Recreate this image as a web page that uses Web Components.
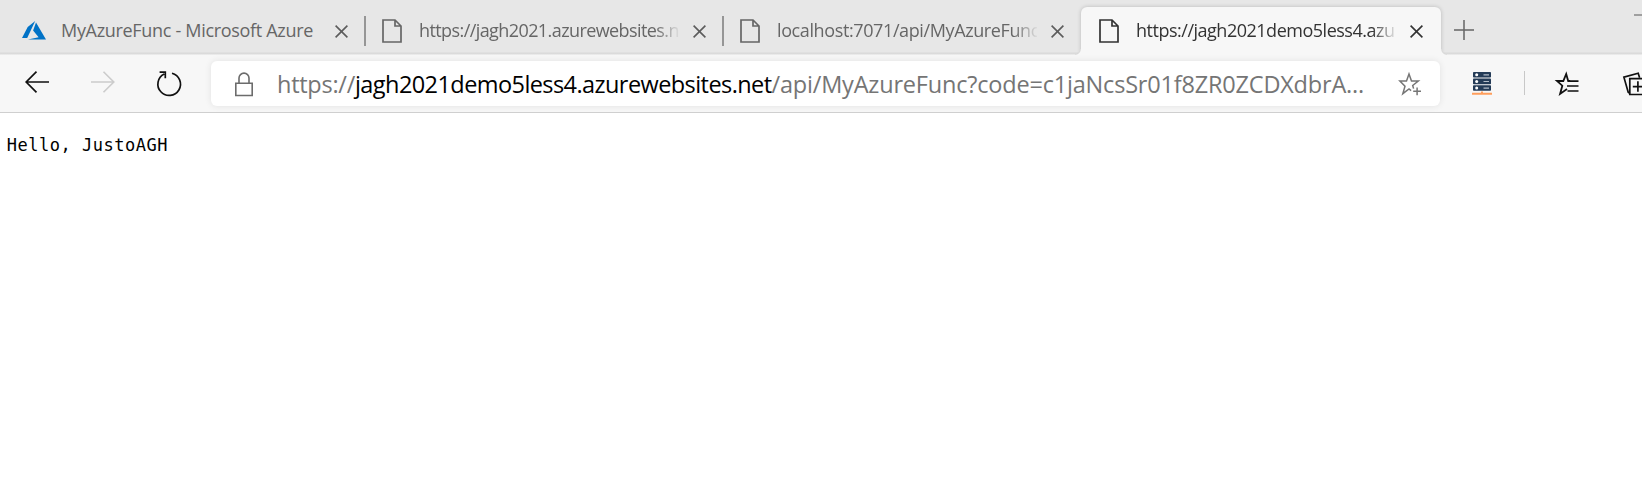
<!DOCTYPE html>
<html lang="en">
<head>
<meta charset="utf-8">
<title>MyAzureFunc</title>
<style>
html,body{margin:0;height:100%;overflow:hidden;background:#fff;font-family:"Open Sans","Noto Sans",sans-serif}
</style>
</head>
<body>
<browser-window></browser-window>
<script>
const define = (name, html, setup) => customElements.define(name, class extends HTMLElement {
  connectedCallback() {
    if (this.shadowRoot) return;
    const t = document.createElement('template');
    t.innerHTML = html;
    this.attachShadow({ mode: 'open' }).appendChild(t.content.cloneNode(true));
    if (setup) setup.call(this, this.shadowRoot);
  }
});

/* Text whose first `chars` characters span `width` pixels. */
define('fit-text', `<style>:host{display:inline-block;white-space:pre}</style><slot></slot>`, function () {
  const text = this.textContent, n = +this.getAttribute('chars') || text.length;
  const ctx = document.createElement('canvas').getContext('2d');
  const cs = getComputedStyle(this);
  ctx.font = `${cs.fontWeight} ${cs.fontSize} ${cs.fontFamily}`;
  this.style.letterSpacing = (this.getAttribute('width') - ctx.measureText(text.slice(0, n)).width) / n + 'px';
});

const icons = {
  azure: [24, 20, `<path fill="#0072c6" d="M13.2 0 5.7 5.9 0 17h5.2zM14 1.5l-2.9 8 5.5 6.7L5.9 18.4H24z"/>`],
  doc: [20, 24, `<path d="M1 1h12l6 6v16H1zM13 1v6h6" fill="none" stroke="currentColor" stroke-width="1.7"/>`],
  close: [13, 13, `<path d="M.6.6l11.8 11.8M12.4.6.6 12.4" stroke="currentColor" stroke-width="1.6"/>`],
  plus: [20, 20, `<path d="M0 10h20M10 0v20" stroke="currentColor" stroke-width="1.5"/>`],
  min: [15, 2, `<path d="M0 1h15" stroke="currentColor" stroke-width="1.3"/>`],
  back: [24, 22, `<path d="M11.5.7 1.2 11l10.3 10.3M1.2 11H24" fill="none" stroke="currentColor" stroke-width="1.7"/>`],
  forward: [24, 22, `<path d="M12.5.7 22.8 11 12.5 21.3M22.8 11H0" fill="none" stroke="currentColor" stroke-width="1.6"/>`],
  reload: [26, 26, `<path d="M16 2.2A11.3 11.3 0 1 1 8.2 3M3.6 1.1h5.7v6.2" fill="none" stroke="currentColor" stroke-width="1.7"/>`],
  lock: [18, 24, `<path d="M.8 11.3h16.4v12.2H.8zM4 11V6.1a5 5 0 0 1 10 0V11" fill="none" stroke="currentColor" stroke-width="1.6"/>`],
  star: [23, 24, `<path d="M13.1 18.7 11 17l-6.2 4.7 2.2-7.6-5.1-5h6.6L11 2l2.5 7.1h6.8l-5.6 4.4.9 3.1" fill="none" stroke="currentColor" stroke-width="1.5"/><path d="M15.2 19.3H23M19.1 15.4v7.8" stroke="currentColor" stroke-width="1.5"/>`],
  server: [20, 23, `<g fill="#243b57"><rect x="1" width="18" height="5.6" rx=".8"/><rect x="1" y="6.6" width="18" height="5.6" rx=".8"/><rect x="1" y="13.2" width="18" height="5.6" rx=".8"/></g><g fill="#fff"><circle cx="4.7" cy="2.8" r="1.5"/><circle cx="4.7" cy="9.4" r="1.5"/><circle cx="4.7" cy="16" r="1.5"/></g><path d="M11.5 2.9H17M11.5 9.5H17M11.5 16.1H17" stroke="#b3bdc9" stroke-width="1.2"/><path d="M0 21.7h20M10 19.6v2" stroke="#ff9e5c" stroke-width="2"/>`],
  favorites: [24, 24, `<path d="M15.2 9h-2L11.2 2 8.3 9H2l5.3 4.7-2.2 8.2L12 17.1" fill="none" stroke="currentColor" stroke-width="1.8"/><path d="M14 9.1h9.5M12 14h11.5M12.5 19h11" stroke="currentColor" stroke-width="1.7"/>`],
  collections: [28, 24, `<path d="M6.8 21.4 5.2 20.3.9 5.2 15.2 1.2l1.4 4.6" fill="none" stroke="currentColor" stroke-width="1.7"/><path d="M6.8 6.7H24v15.8H6.8zM9.8 14.6H20M14.9 9.3v10.5" fill="none" stroke="currentColor" stroke-width="1.7"/>`]
};
define('ui-icon', `<style>:host{display:block;flex:none}svg{display:block;overflow:visible}</style>`, function (root) {
  const [w, h, body] = icons[this.getAttribute('name')];
  const t = document.createElement('template');
  t.innerHTML = `<svg width="${w}" height="${h}" viewBox="0 0 ${w} ${h}">${body}</svg>`;
  root.appendChild(t.content);
});

define('browser-tab', `<style>
:host{display:flex;box-sizing:border-box;width:358px;height:47px;flex:none;align-items:center;padding-left:14px;color:#666;font-size:18px;position:relative}
:host([divided])::before{content:"";position:absolute;left:-1px;top:9px;width:1.5px;height:30px;background:#969696}
.icon{width:26px;display:flex;justify-content:center;margin-top:1px}
.title{width:260px;margin-left:14px;overflow:hidden;line-height:26px;margin-top:-2px;-webkit-mask-image:linear-gradient(90deg,#000 236px,transparent 262px);mask-image:linear-gradient(90deg,#000 236px,transparent 262px)}
:host([whole]) .title{-webkit-mask-image:none;mask-image:none}
.x{margin:1px 0 0 14px;color:#5c5c5c}
:host([whole]) .x{margin-left:13.5px}
:host([active]){width:360px;height:48px;background:#f7f7f7;border-radius:6px 6px 0 0;color:#333;box-shadow:0 0 4px rgba(0,0,0,.2);padding-left:15px;padding-bottom:1px}
:host([active]) .x{color:#333}
:host([active])::before,:host([active])::after{content:"";position:absolute;bottom:0;width:6px;height:6px}
:host([active])::before{left:-6px;background:radial-gradient(circle at 0 0,transparent 5px,#d8d8d8 5.3px,#f7f7f7 6.3px)}
:host([active])::after{right:-6px;background:radial-gradient(circle at 100% 0,transparent 5px,#d8d8d8 5.3px,#f7f7f7 6.3px)}
</style><div class="icon"><slot name="icon"></slot></div><div class="title"><slot></slot></div><ui-icon class="x" name="close"></ui-icon>`);

define('tab-strip', `<style>
:host{display:flex;height:55px;box-sizing:border-box;padding:7px 0 0 7px;background:linear-gradient(#e7e7e7 52px,#d9d9d9 53px,#dcdcdc 54px,#f7f7f7 55px);overflow:hidden}
.plus{margin:13px 0 0 13px;color:#666}.min{margin:7px 0 0 160px;color:#777}
</style>
<browser-tab whole><ui-icon slot="icon" name="azure"></ui-icon><fit-text width="252">MyAzureFunc - Microsoft Azure</fit-text></browser-tab>
<browser-tab divided><ui-icon slot="icon" name="doc"></ui-icon><fit-text chars="31" width="249.5">https://jagh2021.azurewebsites.net</fit-text></browser-tab>
<browser-tab divided><ui-icon slot="icon" name="doc"></ui-icon><fit-text chars="30" width="262">localhost:7071/api/MyAzureFunc</fit-text></browser-tab>
<browser-tab active><ui-icon slot="icon" name="doc"></ui-icon><fit-text chars="30" width="258.5">https://jagh2021demo5less4.azurewebsites.net</fit-text></browser-tab>
<ui-icon class="plus" name="plus"></ui-icon><ui-icon class="min" name="min"></ui-icon>`);

define('address-bar', `<style>
:host{display:flex;width:1229px;height:45px;box-sizing:border-box;flex:none;align-items:center;background:#fff;border-radius:6px;box-shadow:0 0 7px rgba(0,0,0,.09);padding-left:24px;color:#757575;font-size:23.5px;line-height:34px}
.lock{color:#6c6c6c}.url{display:flex;width:1121px;margin:1px 0 0 24px}.host{color:#000}.star{color:#767676;margin-top:1px}
</style><ui-icon class="lock" name="lock"></ui-icon><div class="url"><fit-text width="78">https://</fit-text><fit-text class="host" width="416.5">jagh2021demo5less4.azurewebsites.net</fit-text><fit-text width="592.5">/api/MyAzureFunc?code=c1jaNcsSr01f8ZR0ZCDXdbrA...</fit-text></div><ui-icon class="star" name="star"></ui-icon>`);

define('tool-bar', `<style>
:host{display:flex;align-items:center;height:58px;box-sizing:border-box;background:#f7f7f7;border-bottom:1px solid #cfcfcf;padding-left:25px;overflow:hidden;color:#111}
.f{margin-left:42px;color:#ccc}.r{margin:0 0 0 41px}address-bar{margin-left:29px}
.s{margin-left:32px}.d{flex:none;width:1px;height:24px;background:#c8c8c8;margin:-1px 0 0 32px}.v{margin-left:30px}.c{margin-left:44px}
</style>
<ui-icon name="back" style="margin-top:-3px"></ui-icon><ui-icon class="f" name="forward" style="margin-top:-3px"></ui-icon><ui-icon class="r" name="reload"></ui-icon>
<address-bar></address-bar>
<ui-icon class="s" name="server"></ui-icon><div class="d"></div><ui-icon class="v" name="favorites"></ui-icon><ui-icon class="c" name="collections"></ui-icon>`);

define('page-view', `<style>
:host{display:block;background:#fff;padding:19px 0 0 6.7px}
pre{margin:0;font:17px/26px "DejaVu Sans Mono",monospace;color:#000}
</style><pre><fit-text width="161.2">Hello, JustoAGH</fit-text></pre>`);

define('browser-window', `<style>:host{display:flex;flex-direction:column;height:100vh;overflow:hidden}page-view{flex:1}</style>
<tab-strip></tab-strip><tool-bar></tool-bar><page-view></page-view>`);
</script>
</body>
</html>
